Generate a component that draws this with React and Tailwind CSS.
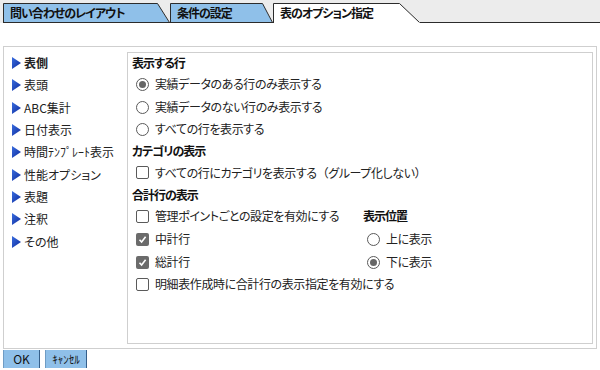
import React from 'react';

const font = "font-['Noto_Sans_CJK_JP','Noto_Sans',sans-serif] [font-feature-settings:'palt']";

function Tab({ label, width, active, slant }) {
  const w = width;
  const pts = `0.5,20 0.5,0.5 ${w - slant - 0.5},0.5 ${w - 0.5},20`;
  return (
    <div className="relative h-[20px] shrink-0" style={{ width: w }}>
      <svg className="absolute inset-0" width={w} height="20" viewBox={`0 0 ${w} 20`}>
        <polygon points={pts} fill={active ? '#ffffff' : '#8fc0e9'} stroke="none" />
        <polyline
          points={`0.5,20 0.5,0.5 ${w - slant - 0.5},0.5 ${w - 0.5},19.5`}
          fill="none"
          stroke="#2b2b2b"
          strokeWidth="1"
        />
        {!active && <line x1="0" y1="19.5" x2={w} y2="19.5" stroke="#2b2b2b" strokeWidth="1" />}
      </svg>
      <span className="relative block pl-[7px] text-[12px] font-bold leading-[19px] tracking-[-1px] text-[#111]">
        {label}
      </span>
    </div>
  );
}

function NavItem({ label, bold }) {
  return (
    <div className="flex h-[22.3px] items-center pl-[8px]">
      <svg width="9" height="12" viewBox="0 0 9 12" className="mr-[3px] shrink-0">
        <defs>
          <linearGradient id="tri" x1="0" y1="0" x2="1" y2="1">
            <stop offset="0" stopColor="#3a6ee0" />
            <stop offset="1" stopColor="#0d2a9c" />
          </linearGradient>
        </defs>
        <polygon points="0,0 9,6 0,12" fill="url(#tri)" />
      </svg>
      <span className={`text-[12px] text-[#222] ${bold ? 'font-bold' : ''}`}>{label}</span>
    </div>
  );
}

function Radio({ checked }) {
  return (
    <span className="flex h-[13px] w-[13px] shrink-0 items-center justify-center rounded-full border border-[#5a5a5a] bg-white">
      {checked && <span className="h-[7px] w-[7px] rounded-full bg-[#666]" />}
    </span>
  );
}

function Check({ checked }) {
  if (checked) {
    return (
      <span className="flex h-[13px] w-[13px] shrink-0 items-center justify-center rounded-[2px] bg-[#6b6b6b]">
        <svg width="9" height="9" viewBox="0 0 9 9">
          <polyline points="1.5,4.8 3.6,7 7.6,1.8" fill="none" stroke="#fff" strokeWidth="1.6" />
        </svg>
      </span>
    );
  }
  return <span className="h-[13px] w-[13px] shrink-0 rounded-[2px] border border-[#5a5a5a] bg-white" />;
}

function Option({ control, label, h = 'h-[22px]' }) {
  return (
    <div className={`flex ${h} items-center pl-[4px]`}>
      {control}
      <span className="ml-[6px] text-[12px] tracking-[-0.4px] text-[#222]">{label}</span>
    </div>
  );
}

function Header({ children, h = 'h-[21px]' }) {
  return (
    <div className={`flex ${h} items-center text-[12px] font-bold tracking-[-1px] text-[#111]`}>{children}</div>
  );
}

export default function App() {
  const nav = ['表側', '表頭', 'ABC集計', '日付表示', '時間ﾃﾝﾌﾟﾚｰﾄ表示', '性能オプション', '表題', '注釈', 'その他'];
  return (
    <div className={`h-[370px] w-[600px] bg-white ${font}`}>
      <div className="flex h-[23px] bg-[#ececec] pl-[3px] pt-[3px]">
        <Tab label="問い合わせのレイアウト" width={167} slant={12} />
        <Tab label="条件の設定" width={103} slant={10} />
        <Tab label="表のオプション指定" width={147} slant={20} active />
        <div className="flex-1 border-b border-[#2b2b2b]" />
      </div>

      <div className="ml-[3px] mt-[23px] flex h-[303px] w-[594px] border border-[#cfcfcf]">
        <div className="w-[123px] pt-[5px]">
          {nav.map((n, i) => (
            <NavItem key={n} label={n} bold={i === 0} />
          ))}
        </div>
        <div className="mb-[4px] mt-[5px] mr-[3px] flex-1 border border-[#cfcfcf] pl-[4px] pt-[1px]">
          <Header h="h-[18px]">表示する行</Header>
          <Option control={<Radio checked />} label="実績データのある行のみ表示する" h="h-[24px]" />
          <Option control={<Radio />} label="実績データのない行のみ表示する" />
          <Option control={<Radio />} label="すべての行を表示する" />
          <Header>カテゴリの表示</Header>
          <Option
            control={<Check />}
            label={
              <>
                すべての行にカテゴリを表示する
                <span className="[font-feature-settings:normal]">（</span>
                グループ化しない
                <span className="[font-feature-settings:normal]">）</span>
              </>
            }
            h="h-[23px]"
          />
          <Header>合計行の表示</Header>
          <div className="grid grid-cols-[231px_1fr]">
            <div>
              <Option control={<Check />} label="管理ポイントごとの設定を有効にする" />
              <Option control={<Check checked />} label="中計行" h="h-[24px]" />
              <Option control={<Check checked />} label="総計行" />
            </div>
            <div>
              <Header h="h-[22px]">表示位置</Header>
              <Option control={<Radio />} label="上に表示" h="h-[24px]" />
              <Option control={<Radio checked />} label="下に表示" />
            </div>
          </div>
          <Option control={<Check />} label="明細表作成時に合計行の表示指定を有効にする" />
        </div>
      </div>

      <div className="ml-[3px] mt-[1px] flex gap-[5px]">
        <button className="h-[18px] w-[37px] border-l border-r border-l-[#6f9cc4] border-r-[#355f8a] bg-[#8fc0e9] text-[12px] leading-[16px] text-[#111]">
          OK
        </button>
        <button className="h-[18px] w-[42px] border-l border-r border-l-[#6f9cc4] border-r-[#355f8a] bg-[#8fc0e9] text-[11px] leading-[16px] text-[#111]">
          ｷｬﾝｾﾙ
        </button>
      </div>
    </div>
  );
}
